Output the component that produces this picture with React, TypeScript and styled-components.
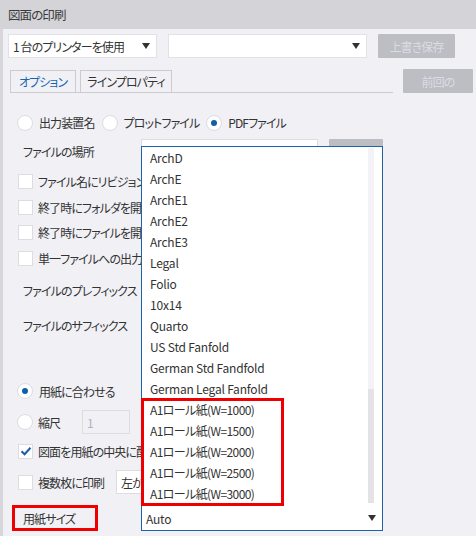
import React from "react";
import styled, { createGlobalStyle } from "styled-components";

const GlobalStyle = createGlobalStyle`
  html, body { margin: 0; padding: 0; background: #f0f0f5; }
  body {
    font-family: "Noto Sans CJK JP", "Noto Sans", sans-serif;
    font-size: 12px;
    color: #333;
    letter-spacing: -0.9px;
    font-feature-settings: "palt";
  }
  *, *::before, *::after { box-sizing: border-box; }
`;

const Window = styled.div`
  width: 476px;
  height: 536px;
  overflow: hidden;
  display: flex;
  flex-direction: column;
  background: #f0f0f5;
`;

const TitleBar = styled.div`
  height: 29px;
  flex: none;
  background: #d3d3d8;
  display: flex;
  align-items: center;
  padding-left: 8px;
  font-size: 12.5px;
  color: #3a3a3a;
`;

const Body = styled.div`
  flex: 1;
  position: relative;
  border-left: 3px solid #d6d6db;
  display: flex;
  flex-direction: column;
`;

const TopRow = styled.div`
  margin-top: 5px;
  height: 24px;
  padding-left: 5px;
  display: flex;
  align-items: center;
`;

const Select = styled.div<{ $w: number; $ml?: number }>`
  width: ${(p) => p.$w}px;
  margin-left: ${(p) => p.$ml ?? 0}px;
  height: 24px;
  background: #fff;
  border: 1px solid #e1e1e6;
  display: flex;
  align-items: center;
  justify-content: space-between;
  padding: 0 6px 0 4px;
  white-space: nowrap;
  overflow: hidden;
`;

const Arrow = styled.span`
  width: 0;
  height: 0;
  border-left: 4.5px solid transparent;
  border-right: 4.5px solid transparent;
  border-top: 6px solid #333;
  flex: none;
`;

const GreyButton = styled.div<{ $w: number; $ml: number }>`
  width: ${(p) => p.$w}px;
  margin-left: ${(p) => p.$ml}px;
  height: 24px;
  background: #bdbdc4;
  color: #dcdce1;
  display: flex;
  align-items: center;
  justify-content: center;
  border-radius: 1px;
  flex: none;
  overflow: hidden;
`;

const TabRow = styled.div`
  margin-top: 11px;
  height: 24px;
  padding-left: 7px;
  display: flex;
  align-items: flex-start;
`;

const TabStrip = styled.div`
  width: 383px;
  height: 24px;
  display: flex;
  align-items: flex-end;
  gap: 4px;
  border-bottom: 1px solid #cbcbd0;
`;

const Tab = styled.div<{ $active?: boolean; $w: number }>`
  width: ${(p) => p.$w}px;
  height: 22px;
  border: 1px solid #cbcbd0;
  border-bottom: none;
  display: flex;
  align-items: center;
  justify-content: center;
  color: ${(p) => (p.$active ? "#1565b3" : "#333")};
  background: #f0f0f5;
`;

const Content = styled.div`
  padding-left: 14px;
  display: flex;
  flex-direction: column;
`;

const Row = styled.div<{ $mt: number; $h: number; $clip?: boolean }>`
  margin-top: ${(p) => p.$mt}px;
  height: ${(p) => p.$h}px;
  display: flex;
  align-items: center;
  white-space: nowrap;
  ${(p) => (p.$clip ? "width: 124px; overflow: hidden;" : "")}
`;

const Radio = styled.span<{ $on?: boolean }>`
  width: 16px;
  height: 16px;
  border-radius: 50%;
  background: #fff;
  border: 1px solid #dcdce1;
  flex: none;
  display: flex;
  align-items: center;
  justify-content: center;
  &::after {
    content: "";
    width: 6px;
    height: 6px;
    border-radius: 50%;
    background: ${(p) => (p.$on ? "#0f5ea8" : "transparent")};
  }
`;

const OptionLabel = styled.span<{ $gap?: number; $w?: number }>`
  margin-left: ${(p) => p.$gap ?? 6}px;
  margin-right: 7px;
  flex: none;
  ${(p) => (p.$w ? `width: ${p.$w}px;` : "")}
`;

const Check = styled.span`
  width: 15px;
  height: 15px;
  margin-left: 1px;
  background: #fff;
  border: 1px solid #dcdce1;
  flex: none;
  display: flex;
  align-items: center;
  justify-content: center;
`;

const FieldLabel = styled.span<{ $w: number }>`
  width: ${(p) => p.$w}px;
  padding-left: 6px;
  flex: none;
`;

const TextInput = styled.div<{ $w: number; $ml?: number; $disabled?: boolean }>`
  width: ${(p) => p.$w}px;
  margin-left: ${(p) => p.$ml ?? 0}px;
  height: 24px;
  background: ${(p) => (p.$disabled ? "#f0f0f5" : "#fff")};
  border: 1px solid #dcdce1;
  color: ${(p) => (p.$disabled ? "#b3b3bb" : "#333")};
  display: flex;
  align-items: center;
  padding-left: 4px;
  flex: none;
  overflow: hidden;
`;

const SizeLabel = styled.div`
  margin-left: -5px;
  width: 86px;
  height: 26px;
  border: 3px solid #ee0000;
  padding-left: 8px;
  display: flex;
  align-items: center;
`;

const Dropdown = styled.div`
  position: absolute;
  left: 138px;
  top: 117px;
  width: 242px;
  height: 385px;
  background: #fff;
  border: 1px solid #1c63a8;
  display: flex;
  flex-direction: column;
  z-index: 5;
  letter-spacing: -0.2px;
`;

const ListArea = styled.div`
  height: 357px;
  display: flex;
  flex: none;
`;

const Items = styled.div`
  flex: 1;
  display: flex;
  flex-direction: column;
`;

const Item = styled.div<{ $jp?: boolean }>`
  height: 21px;
  line-height: 21px;
  padding-left: 8px;
  white-space: nowrap;
  color: #333;
  letter-spacing: ${(p) => (p.$jp ? "-0.6px" : "-0.2px")};
`;

const Marked = styled.div`
  position: relative;
  &::after {
    content: "";
    position: absolute;
    left: -1px;
    top: -1px;
    width: 143px;
    height: 108px;
    border: 3px solid #ee0000;
    z-index: 2;
    pointer-events: none;
  }
`;

const Track = styled.div`
  width: 6px;
  margin: 1px 8px 1px 0;
  background: #f3f3f7;
  display: flex;
  flex-direction: column;
  justify-content: flex-end;
`;

const Thumb = styled.div`
  height: 114px;
  background: #e2e2e7;
`;

const AutoRow = styled.div`
  flex: 1;
  display: flex;
  align-items: center;
  justify-content: space-between;
  padding: 2px 6px 0 4px;
`;

const CheckMark = () => (
  <svg width="12" height="10" viewBox="0 0 12 10">
    <path d="M1.5 5.2 L4.6 8.2 L10.5 1.8" fill="none" stroke="#1a5ea8" strokeWidth="2" />
  </svg>
);

const sizes = [
  "ArchD",
  "ArchE",
  "ArchE1",
  "ArchE2",
  "ArchE3",
  "Legal",
  "Folio",
  "10x14",
  "Quarto",
  "US Std Fanfold",
  "German Std Fandfold",
  "German Legal Fanfold",
];
const rolls = ["1000", "1500", "2000", "2500", "3000"];

export default function App() {
  return (
    <>
      <GlobalStyle />
      <Window>
        <TitleBar>図面の印刷</TitleBar>
        <Body>
          <TopRow>
            <Select $w={149}>
              <span>1 台のプリンターを使用</span>
              <Arrow />
            </Select>
            <Select $w={199} $ml={11}>
              <span />
              <Arrow />
            </Select>
            <GreyButton $w={77} $ml={11}>上書き保存</GreyButton>
          </TopRow>
          <TabRow>
            <TabStrip>
              <Tab $active $w={66}>オプション</Tab>
              <Tab $w={92}>ラインプロパティ</Tab>
            </TabStrip>
            <GreyButton $w={70} $ml={10}>前回の</GreyButton>
          </TabRow>
          <Content>
            <Row $mt={20} $h={19}>
              <Radio />
              <OptionLabel>出力装置名</OptionLabel>
              <Radio />
              <OptionLabel>プロットファイル</OptionLabel>
              <Radio $on />
              <OptionLabel>PDFファイル</OptionLabel>
            </Row>
            <Row $mt={6} $h={26}>
              <FieldLabel $w={124}>ファイルの場所</FieldLabel>
              <TextInput $w={177} />
              <GreyButton $w={54} $ml={11}>参照...</GreyButton>
            </Row>
            <Row $mt={5} $h={25.5} $clip>
              <Check />
              <OptionLabel $gap={5}>ファイル名にリビジョンマークを付ける</OptionLabel>
            </Row>
            <Row $mt={0} $h={25.5} $clip>
              <Check />
              <OptionLabel $gap={5}>終了時にフォルダを開く</OptionLabel>
            </Row>
            <Row $mt={0} $h={25.5} $clip>
              <Check />
              <OptionLabel $gap={5}>終了時にファイルを開く</OptionLabel>
            </Row>
            <Row $mt={0} $h={25.5} $clip>
              <Check />
              <OptionLabel $gap={5}>単一ファイルへの出力</OptionLabel>
            </Row>
            <Row $mt={6} $h={26} $clip>
              <FieldLabel $w={124}>ファイルのプレフィックス</FieldLabel>
            </Row>
            <Row $mt={9} $h={26} $clip>
              <FieldLabel $w={124}>ファイルのサフィックス</FieldLabel>
            </Row>
            <Row $mt={40} $h={26}>
              <Radio $on />
              <OptionLabel>用紙に合わせる</OptionLabel>
            </Row>
            <Row $mt={5} $h={26}>
              <Radio />
              <OptionLabel $gap={5} $w={37}>縮尺</OptionLabel>
              <TextInput $w={48} $disabled>1</TextInput>
            </Row>
            <Row $mt={3} $h={26} $clip>
              <Check>
                <CheckMark />
              </Check>
              <OptionLabel $gap={5}>図面を用紙の中央に配置</OptionLabel>
            </Row>
            <Row $mt={5} $h={26} $clip>
              <Check />
              <OptionLabel $gap={5} $w={71}>複数枚に印刷</OptionLabel>
              <TextInput $w={100}>左から右へ</TextInput>
            </Row>
            <Row $mt={10} $h={26}>
              <SizeLabel>用紙サイズ</SizeLabel>
            </Row>
          </Content>
          <Dropdown>
            <ListArea>
              <Items>
                {sizes.map((s) => (
                  <Item key={s}>{s}</Item>
                ))}
                <Marked>
                  {rolls.map((r) => (
                    <Item key={r} $jp>
                      A1ロール紙(W={r})
                    </Item>
                  ))}
                </Marked>
              </Items>
              <Track>
                <Thumb />
              </Track>
            </ListArea>
            <AutoRow>
              <span>Auto</span>
              <Arrow />
            </AutoRow>
          </Dropdown>
        </Body>
      </Window>
    </>
  );
}
